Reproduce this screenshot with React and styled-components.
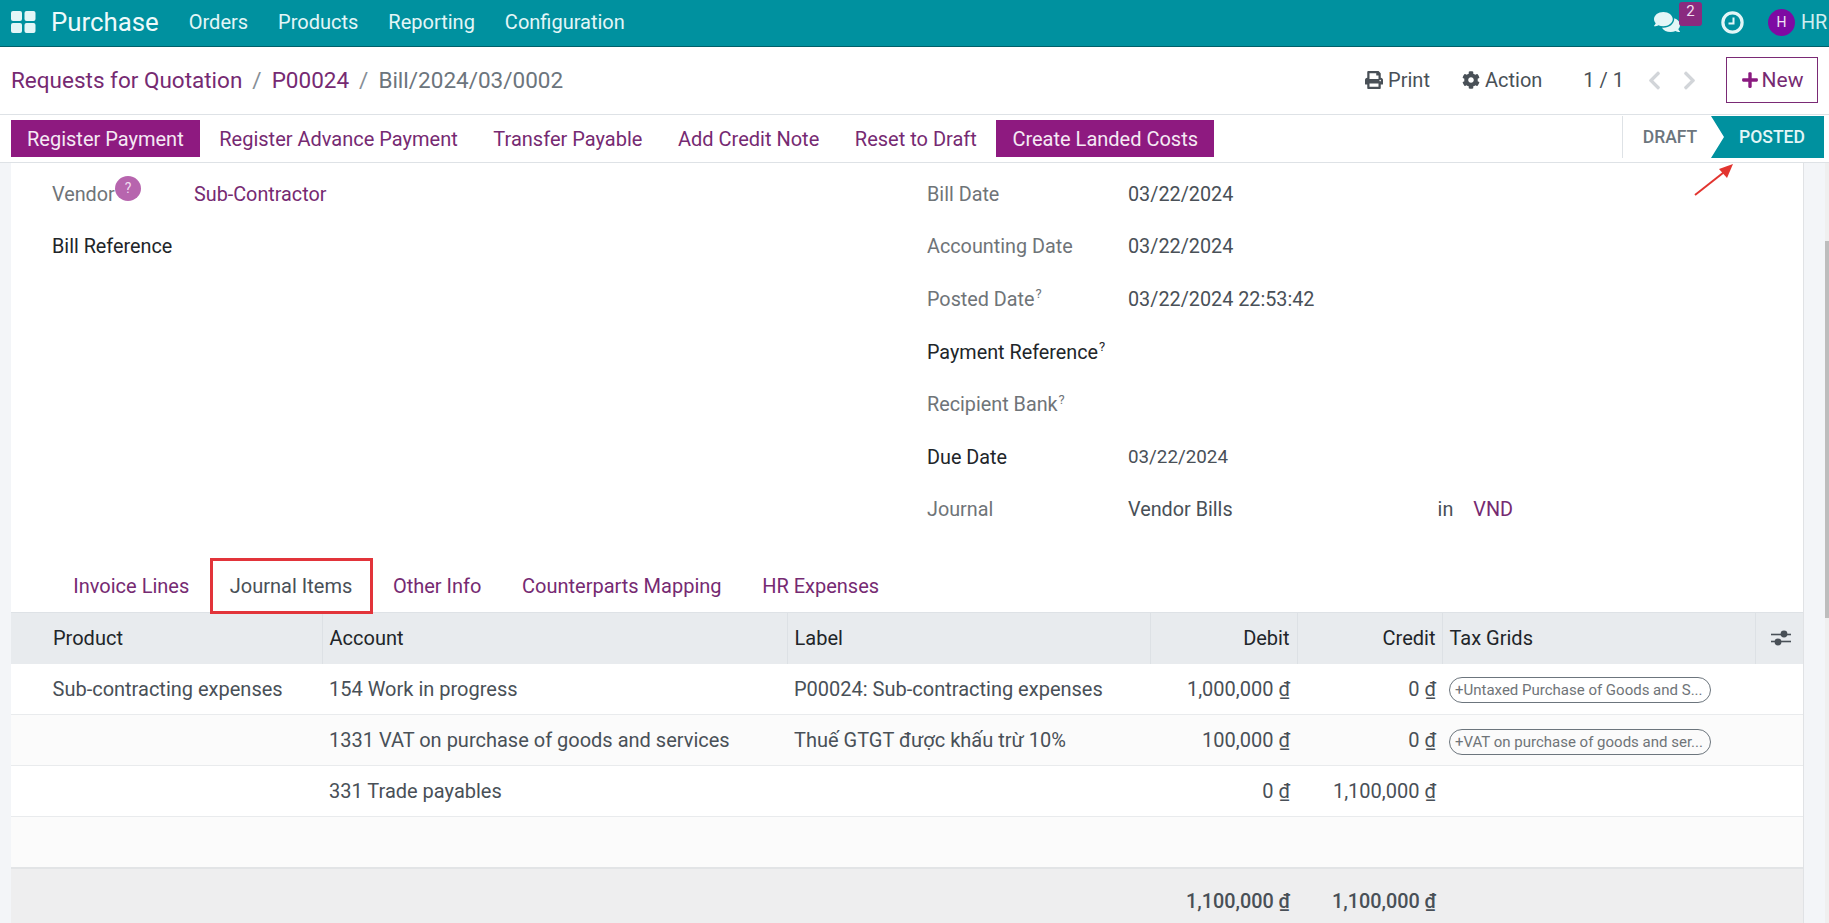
import React from "react";
import styled, { createGlobalStyle } from "styled-components";
import { FaComments, FaPrint, FaCog, FaPlus, FaChevronLeft, FaChevronRight } from "react-icons/fa";

const GlobalStyle = createGlobalStyle`
    html, body {
        margin: 0;
        height: 100%;
        overflow: hidden;
        background: #fff;
    }
    body {
        font-family: Roboto, "Liberation Sans", sans-serif;
        font-size: 19.8px;
        color: #495057;
    }
`;

const Page = styled.div`
    position: relative;
    display: flex;
    flex-direction: column;
    height: 923px;
    overflow: hidden;
`;

const TopBar = styled.header`
    display: flex;
    align-items: center;
    flex: 0 0 47px;
    box-sizing: border-box;
    padding: 0 0 2px 11px;
    background: #00919f;
    border-bottom: 1px solid #00606a;
    color: #fff;
`;

const AppsIcon = styled.svg`
    width: 25px;
    height: 22px;
    margin-right: 15px;
    fill: #e3f6f7;
`;

const Brand = styled.span`
    font-size: 25.8px;
    margin-right: 30px;
    color: #eefafb;
`;

const MenuItem = styled.span`
    font-size: 20px;
    margin-right: 30px;
    color: #e3f6f7;
`;

const Systray = styled.div`
    display: flex;
    align-items: center;
    margin-left: auto;
    white-space: nowrap;
`;

const ChatWrap = styled.div`
    position: relative;
    display: flex;
    margin-right: 41px;
    font-size: 26px;
    color: #e3f6f7;
`;

const Badge = styled.span`
    position: absolute;
    left: 25px;
    top: -7px;
    width: 23px;
    height: 24px;
    border-radius: 3px;
    background: #8a2a7f;
    color: #f2dff0;
    font-size: 15px;
    text-align: center;
    line-height: 19px;
`;

const ClockIcon = styled.svg`
    width: 23px;
    height: 23px;
    margin-right: 24px;
    fill: none;
    stroke: #e3f6f7;
`;

const Avatar = styled.span`
    display: flex;
    align-items: center;
    justify-content: center;
    width: 27px;
    height: 27px;
    border-radius: 50%;
    margin-right: 6px;
    background: #7e0aa3;
    font-size: 14px;
    color: #f0e3f5;
`;

const UserName = styled.span`
    width: 28px;
    font-size: 19.8px;
    color: #cfeef0;
`;

const ControlPanel = styled.div`
    display: flex;
    align-items: center;
    flex: 0 0 68px;
    box-sizing: border-box;
    padding: 0 11px 1px;
    border-bottom: 1px solid #dee2e6;
`;

const Crumb = styled.span`
    font-size: 22.5px;
    color: ${(props) => (props.current ? "#6c757d" : "#762a72")};
`;

const CrumbSep = styled.span`
    font-size: 22.5px;
    margin: 0 10px;
    color: #868e96;
`;

const PanelRight = styled.div`
    display: flex;
    align-items: center;
    margin-left: auto;
`;

const PanelAction = styled.span`
    display: flex;
    align-items: center;
    gap: 5px;
    font-size: 20px;
    margin-right: 32px;
    color: #495057;
    svg {
        font-size: 18px;
    }
`;

const Pager = styled.span`
    font-size: 20px;
    margin: 0 20px 0 9px;
    color: #495057;
`;

const PagerArrow = styled.span`
    display: flex;
    font-size: 21px;
    color: #d2d5d9;
    margin-right: 14px;
`;

const NewButton = styled.button`
    display: flex;
    align-items: center;
    justify-content: center;
    gap: 3px;
    width: 92px;
    height: 46px;
    margin: 0 0 0 12px;
    padding: 0;
    background: #fff;
    border: 1px solid #7a2a75;
    font-family: inherit;
    font-size: 21px;
    color: #762a72;
    svg {
        font-size: 18px;
        color: #8a1a80;
    }
`;

const StatusBar = styled.div`
    display: flex;
    align-items: center;
    flex: 0 0 48px;
    box-sizing: border-box;
    padding: 0 5px 0 11px;
    border-bottom: 1px solid #dee2e6;
`;

const ActionButton = styled.button`
    height: 37px;
    margin: 0 3.6px 0 0;
    padding: 0 16px;
    border: 0;
    background: ${(props) => (props.primary ? "#8e1a80" : "transparent")};
    color: ${(props) => (props.primary ? "#f5e9f4" : "#762a72")};
    font-family: inherit;
    font-size: 20px;
    white-space: nowrap;
`;

const Stages = styled.div`
    display: flex;
    align-items: center;
    align-self: flex-start;
    height: 42px;
    margin: 1px 0 0 auto;
    border-left: 1px solid #dee2e6;
`;

const Stage = styled.span`
    display: flex;
    align-items: center;
    justify-content: center;
    height: 100%;
    box-sizing: border-box;
    font-size: 17.5px;
    font-weight: 500;
    color: ${(props) => (props.active ? "#e3f6f7" : "#6c757d")};
    width: ${(props) => (props.active ? "113px" : "88px")};
    background: ${(props) => (props.active ? "#00919f" : "transparent")};
    padding-left: ${(props) => (props.active ? "9px" : "6px")};
    clip-path: ${(props) =>
        props.active ? "polygon(0 0, 100% 0, 100% 100%, 0 100%, 13px 50%)" : "none"};
`;

const Content = styled.main`
    flex: 1;
    display: flex;
    background: #f3f5f8;
    min-height: 0;
`;

const Sheet = styled.section`
    display: flex;
    flex-direction: column;
    width: 1793px;
    margin-left: 11px;
    background: #fff;
    border-right: 1px solid #e0e2e5;
    box-sizing: border-box;
`;

const ScrollTrack = styled.div`
    flex: 0 0 4px;
    margin-left: auto;
    background: #efefef;
`;

const ScrollThumb = styled.div`
    height: 377px;
    margin-top: 78px;
    background: #bdbdbd;
`;

const FormGrid = styled.div`
    display: grid;
    flex: 0 0 395px;
    grid-template-columns: 875px 1fr;
    padding: 5px 0 0 41px;
    box-sizing: border-box;
`;

const FormColumn = styled.div`
    display: flex;
    flex-direction: column;
`;

const FieldRow = styled.div`
    display: flex;
    align-items: center;
    flex: 0 0 52.6px;
`;

const FieldLabel = styled.span`
    position: relative;
    flex: 0 0 ${(props) => props.width || 201}px;
    color: ${(props) => (props.strong ? "#212529" : "#6f7478")};
    sup {
        font-size: 13px;
        line-height: 0;
        margin-left: 1px;
    }
`;

const FieldValue = styled.span`
    font-size: ${(props) => (props.compact ? "18.8px" : "inherit")};
    color: ${(props) => (props.link ? "#762a72" : "#495057")};
`;

const HelpDot = styled.span`
    position: absolute;
    left: 63px;
    top: -7px;
    width: 26px;
    height: 25px;
    border-radius: 50%;
    background: #b765ae;
    color: #f0dcee;
    font-size: 14px;
    line-height: 25px;
    text-align: center;
`;

const JournalRight = styled.span`
    display: flex;
    gap: 20px;
    margin-left: 205px;
`;

const Tabs = styled.nav`
    display: flex;
    flex: 0 0 54px;
    align-items: stretch;
    padding-left: 42px;
    box-sizing: border-box;
    font-size: 20px;
`;

const Tab = styled.span`
    position: relative;
    display: flex;
    align-items: center;
    padding: 1px 20.3px 0;
    color: ${(props) => (props.active ? "#495057" : "#762a72")};
`;

const Highlight = styled.span`
    position: absolute;
    left: 0.5px;
    right: 0;
    top: 0;
    bottom: -2px;
    border: 3px solid #e2343a;
`;

const Table = styled.table`
    width: 1792px;
    border-collapse: collapse;
    table-layout: fixed;
    font-size: 20px;
`;

const Th = styled.th`
    height: 51px;
    padding: 0 ${(props) => (props.tight ? "6px" : "7px")} 1px ${(props) => (props.first ? "42px" : "7px")};
    box-sizing: border-box;
    font-weight: 400;
    color: #212529;
    background: #e8ebee;
    border-left: ${(props) => (props.first ? "0" : "1px solid #dde1e5")};
    border-top: 1px solid #dee2e6;
    text-align: ${(props) => (props.right ? "right" : "left")};
`;

const Row = styled.tr`
    height: 51px;
    background: ${(props) => (props.odd ? "#fbfbfb" : "#fff")};
    border-bottom: 1px solid #e9ebed;
`;

const Td = styled.td`
    padding: 0 ${(props) => (props.tight ? "6px" : "7px")} 0 ${(props) => (props.first ? "41.5px" : "7px")};
    box-sizing: border-box;
    color: #495057;
    white-space: nowrap;
    text-align: ${(props) => (props.right ? "right" : "left")};
`;

const Pill = styled.span`
    display: block;
    box-sizing: border-box;
    width: 262px;
    height: 26px;
    margin-top: 3px;
    padding: 0 5px;
    border: 1px solid #6c757d;
    border-radius: 13px;
    font-size: 15px;
    line-height: 25px;
    color: #6f7478;
    white-space: nowrap;
`;

const Currency = styled.u`
    text-underline-offset: 2px;
`;

const FooterRow = styled.tr`
    height: 66px;
    background: #eeeeef;
    border-top: 2px solid #e2e4e6;
`;

const FooterCell = styled(Td)`
    font-size: 19.8px;
    font-weight: 500;
    color: #495057;
`;

const AdjustIcon = styled.svg`
    display: block;
    width: 20px;
    height: 18px;
    margin-left: 8px;
    fill: #495057;
    stroke: #495057;
`;

const ArrowOverlay = styled.svg`
    position: absolute;
    left: 1690px;
    top: 160px;
    width: 48px;
    height: 40px;
`;

const columns = [311, 465, 363, 147, 145, 313, 48];

const lines = [
    {
        product: "Sub-contracting expenses",
        account: "154 Work in progress",
        label: "P00024: Sub-contracting expenses",
        debit: "1,000,000",
        credit: "0",
        tax: "+Untaxed Purchase of Goods and S...",
    },
    {
        account: "1331 VAT on purchase of goods and services",
        label: "Thuế GTGT được khấu trừ 10%",
        debit: "100,000",
        credit: "0",
        tax: "+VAT on purchase of goods and ser...",
    },
    { account: "331 Trade payables", debit: "0", credit: "1,100,000" },
];

const Money = ({ value }) => (
    <>
        {value} <Currency>₫</Currency>
    </>
);

const App = () => {
    return (
        <Page>
            <GlobalStyle />
            <TopBar>
                <AppsIcon viewBox="0 0 25 22">
                    <rect x="0" y="0" width="11" height="10" rx="2" />
                    <rect x="13.5" y="0" width="11" height="10" rx="2" />
                    <rect x="0" y="12" width="11" height="10" rx="2" />
                    <rect x="13.5" y="12" width="11" height="10" rx="2" />
                </AppsIcon>
                <Brand>Purchase</Brand>
                <MenuItem>Orders</MenuItem>
                <MenuItem>Products</MenuItem>
                <MenuItem>Reporting</MenuItem>
                <MenuItem>Configuration</MenuItem>
                <Systray>
                    <ChatWrap>
                        <FaComments />
                        <Badge>2</Badge>
                    </ChatWrap>
                    <ClockIcon viewBox="0 0 23 23">
                        <circle cx="11.5" cy="11.5" r="9.6" strokeWidth="3.2" />
                        <path d="M12.5 6.5v6H7.5" strokeWidth="2" />
                    </ClockIcon>
                    <Avatar>H</Avatar>
                    <UserName>HR</UserName>
                </Systray>
            </TopBar>

            <ControlPanel>
                <Crumb>Requests for Quotation</Crumb>
                <CrumbSep>/</CrumbSep>
                <Crumb>P00024</Crumb>
                <CrumbSep>/</CrumbSep>
                <Crumb current>Bill/2024/03/0002</Crumb>
                <PanelRight>
                    <PanelAction>
                        <FaPrint />
                        Print
                    </PanelAction>
                    <PanelAction>
                        <FaCog />
                        Action
                    </PanelAction>
                    <Pager>1 / 1</Pager>
                    <PagerArrow>
                        <FaChevronLeft />
                    </PagerArrow>
                    <PagerArrow>
                        <FaChevronRight />
                    </PagerArrow>
                    <NewButton>
                        <FaPlus />
                        New
                    </NewButton>
                </PanelRight>
            </ControlPanel>

            <StatusBar>
                <ActionButton primary>Register Payment</ActionButton>
                <ActionButton>Register Advance Payment</ActionButton>
                <ActionButton>Transfer Payable</ActionButton>
                <ActionButton>Add Credit Note</ActionButton>
                <ActionButton>Reset to Draft</ActionButton>
                <ActionButton primary>Create Landed Costs</ActionButton>
                <Stages>
                    <Stage>DRAFT</Stage>
                    <Stage active>POSTED</Stage>
                </Stages>
            </StatusBar>

            <Content>
                <Sheet>
                    <FormGrid>
                        <FormColumn>
                            <FieldRow>
                                <FieldLabel width={142}>
                                    Vendor
                                    <HelpDot>?</HelpDot>
                                </FieldLabel>
                                <FieldValue link>Sub-Contractor</FieldValue>
                            </FieldRow>
                            <FieldRow>
                                <FieldLabel width={142} strong>
                                    Bill Reference
                                </FieldLabel>
                            </FieldRow>
                        </FormColumn>
                        <FormColumn>
                            <FieldRow>
                                <FieldLabel>Bill Date</FieldLabel>
                                <FieldValue>03/22/2024</FieldValue>
                            </FieldRow>
                            <FieldRow>
                                <FieldLabel>Accounting Date</FieldLabel>
                                <FieldValue>03/22/2024</FieldValue>
                            </FieldRow>
                            <FieldRow>
                                <FieldLabel>
                                    Posted Date<sup>?</sup>
                                </FieldLabel>
                                <FieldValue>03/22/2024 22:53:42</FieldValue>
                            </FieldRow>
                            <FieldRow>
                                <FieldLabel strong>
                                    Payment Reference<sup>?</sup>
                                </FieldLabel>
                            </FieldRow>
                            <FieldRow>
                                <FieldLabel>
                                    Recipient Bank<sup>?</sup>
                                </FieldLabel>
                            </FieldRow>
                            <FieldRow>
                                <FieldLabel strong>Due Date</FieldLabel>
                                <FieldValue compact>03/22/2024</FieldValue>
                            </FieldRow>
                            <FieldRow>
                                <FieldLabel>Journal</FieldLabel>
                                <FieldValue>Vendor Bills</FieldValue>
                                <JournalRight>
                                    <span>in</span>
                                    <FieldValue link>VND</FieldValue>
                                </JournalRight>
                            </FieldRow>
                        </FormColumn>
                    </FormGrid>

                    <Tabs>
                        <Tab>Invoice Lines</Tab>
                        <Tab active>
                            Journal Items
                            <Highlight />
                        </Tab>
                        <Tab>Other Info</Tab>
                        <Tab>Counterparts Mapping</Tab>
                        <Tab>HR Expenses</Tab>
                    </Tabs>

                    <Table>
                        <colgroup>
                            {columns.map((width, i) => (
                                <col key={i} width={width} />
                            ))}
                        </colgroup>
                        <thead>
                            <tr>
                                <Th first>Product</Th>
                                <Th>Account</Th>
                                <Th>Label</Th>
                                <Th right>Debit</Th>
                                <Th right tight>Credit</Th>
                                <Th>Tax Grids</Th>
                                <Th>
                                    <AdjustIcon viewBox="0 0 20 18">
                                        <line x1="0" y1="5.5" x2="20" y2="5.5" strokeWidth="1.6" />
                                        <line x1="0" y1="12.5" x2="20" y2="12.5" strokeWidth="1.6" />
                                        <circle cx="13" cy="5" r="3.4" stroke="none" />
                                        <circle cx="7" cy="13" r="3.4" stroke="none" />
                                    </AdjustIcon>
                                </Th>
                            </tr>
                        </thead>
                        <tbody>
                            {lines.map((line, i) => (
                                <Row key={i} odd={i % 2 === 1}>
                                    <Td first>{line.product}</Td>
                                    <Td>{line.account}</Td>
                                    <Td>{line.label}</Td>
                                    <Td right>
                                        <Money value={line.debit} />
                                    </Td>
                                    <Td right tight>
                                        <Money value={line.credit} />
                                    </Td>
                                    <Td>{line.tax && <Pill>{line.tax}</Pill>}</Td>
                                    <Td />
                                </Row>
                            ))}
                            <Row odd>
                                <Td colSpan={7} />
                            </Row>
                            <FooterRow>
                                <FooterCell colSpan={3} />
                                <FooterCell right>
                                    <Money value="1,100,000" />
                                </FooterCell>
                                <FooterCell right tight>
                                    <Money value="1,100,000" />
                                </FooterCell>
                                <FooterCell colSpan={2} />
                            </FooterRow>
                        </tbody>
                    </Table>
                </Sheet>
                <ScrollTrack>
                    <ScrollThumb />
                </ScrollTrack>
            </Content>

            <ArrowOverlay viewBox="0 0 48 40">
                <line x1="5" y1="35" x2="38" y2="9" stroke="#e2342f" strokeWidth="2" />
                <polygon points="43,4 29,9 37,18" fill="#e2342f" />
            </ArrowOverlay>
        </Page>
    );
};

export default App;
